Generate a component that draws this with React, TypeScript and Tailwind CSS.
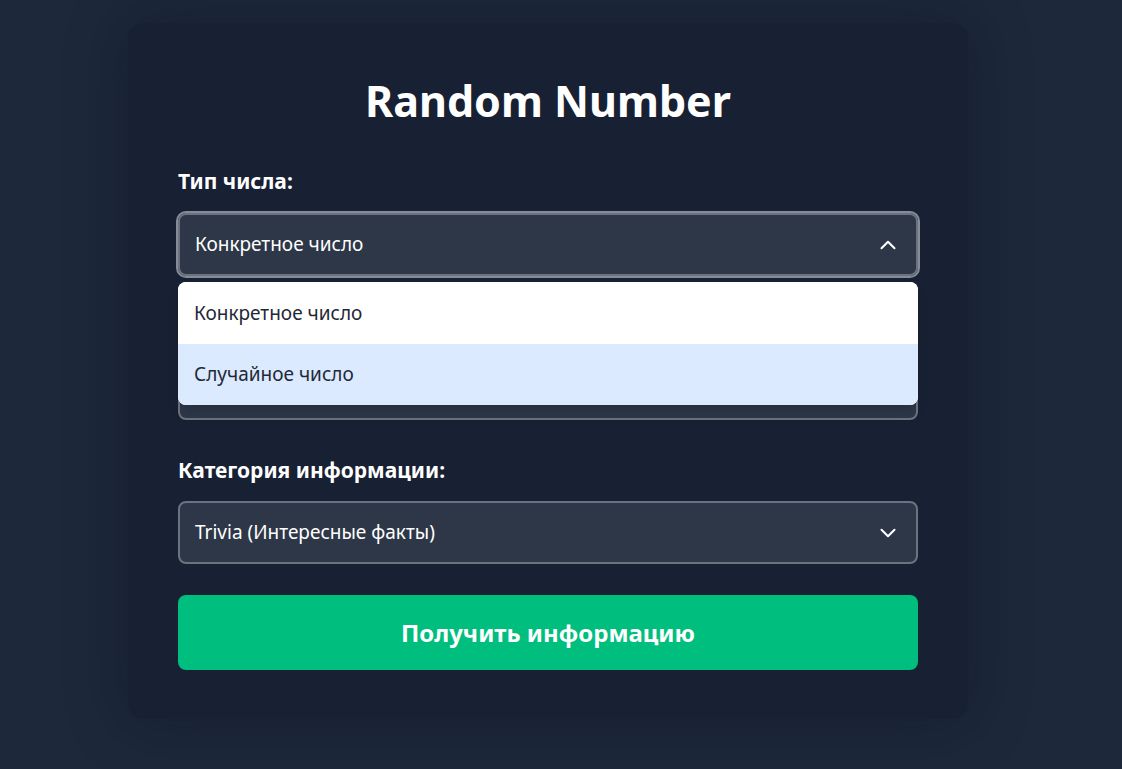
import React, { useState } from 'react';
import { ChevronDown, ChevronUp } from 'lucide-react';

const FONT = { fontFamily: '"Noto Sans", "Open Sans", sans-serif' };

const App: React.FC = () => {
  const [type, setType] = useState('Конкретное число');
  const [open, setOpen] = useState(true);

  return (
    <div className="min-h-screen bg-[#1d283b] pt-[23px] pl-[128px] pb-[50px]" style={FONT}>
      <div className="w-[840px] rounded-2xl bg-[#182033] px-[50px] pt-[50px] pb-[49px] shadow-[0_0_60px_rgba(10,15,30,0.35)]">
        <h1 className="mb-[39px] text-center text-[43px] font-bold leading-[56px] text-white">Random Number</h1>

        {/* Number type */}
        <div className="mb-[37px]">
          <label className="mb-[18px] block text-[21px] font-bold leading-[27px] text-white">Тип числа:</label>
          <div className="relative">
            <button
              onClick={() => setOpen(o => !o)}
              className="flex h-[63px] w-full items-center justify-between rounded-lg border-2 border-[#6b7280] bg-[#2d3748] pl-[15px] pr-[15px] text-[19px] text-white outline outline-2 outline-offset-0 outline-[#858b97]"
            >
              <span>{type}</span>
              {open ? <ChevronUp size={26} strokeWidth={1.9} /> : <ChevronDown size={26} strokeWidth={1.9} />}
            </button>
            {open && (
              <div className="absolute left-0 right-0 top-[69px] z-10 overflow-hidden rounded-lg bg-white shadow-lg">
                {['Конкретное число', 'Случайное число'].map(opt => (
                  <div
                    key={opt}
                    onClick={() => { setType(opt); setOpen(false); }}
                    className={`flex h-[61.5px] cursor-pointer items-center px-4 text-[19px] text-[#1f2937] ${opt === 'Случайное число' ? 'bg-[#dbeafe]' : 'bg-white'}`}
                  >
                    {opt}
                  </div>
                ))}
              </div>
            )}
          </div>
        </div>

        {/* Number input (hidden under the open menu) */}
        <div className="mb-[37px]">
          <div className="mb-[17px] h-[27px]" />
          <input
            aria-label="Число"
            className="h-[63px] w-full rounded-lg border-2 border-[#6b7280] bg-[#2d3748] px-4 text-[19px] text-white outline-none"
          />
        </div>

        {/* Category */}
        <div>
          <label className="mb-[17px] block text-[21px] font-bold leading-[27px] text-white">Категория информации:</label>
          <div className="flex h-[63px] w-full items-center justify-between rounded-lg border-2 border-[#6b7280] bg-[#2d3748] pl-[15px] pr-[15px] text-[19px] text-white">
            <span>Trivia (Интересные факты)</span>
            <ChevronDown size={26} strokeWidth={1.9} />
          </div>
        </div>

        <button className="mt-[31px] h-[75px] w-full rounded-lg bg-[#00be7e] text-[24px] font-bold text-white">
          Получить информацию
        </button>
      </div>
    </div>
  );
};

export default App;
